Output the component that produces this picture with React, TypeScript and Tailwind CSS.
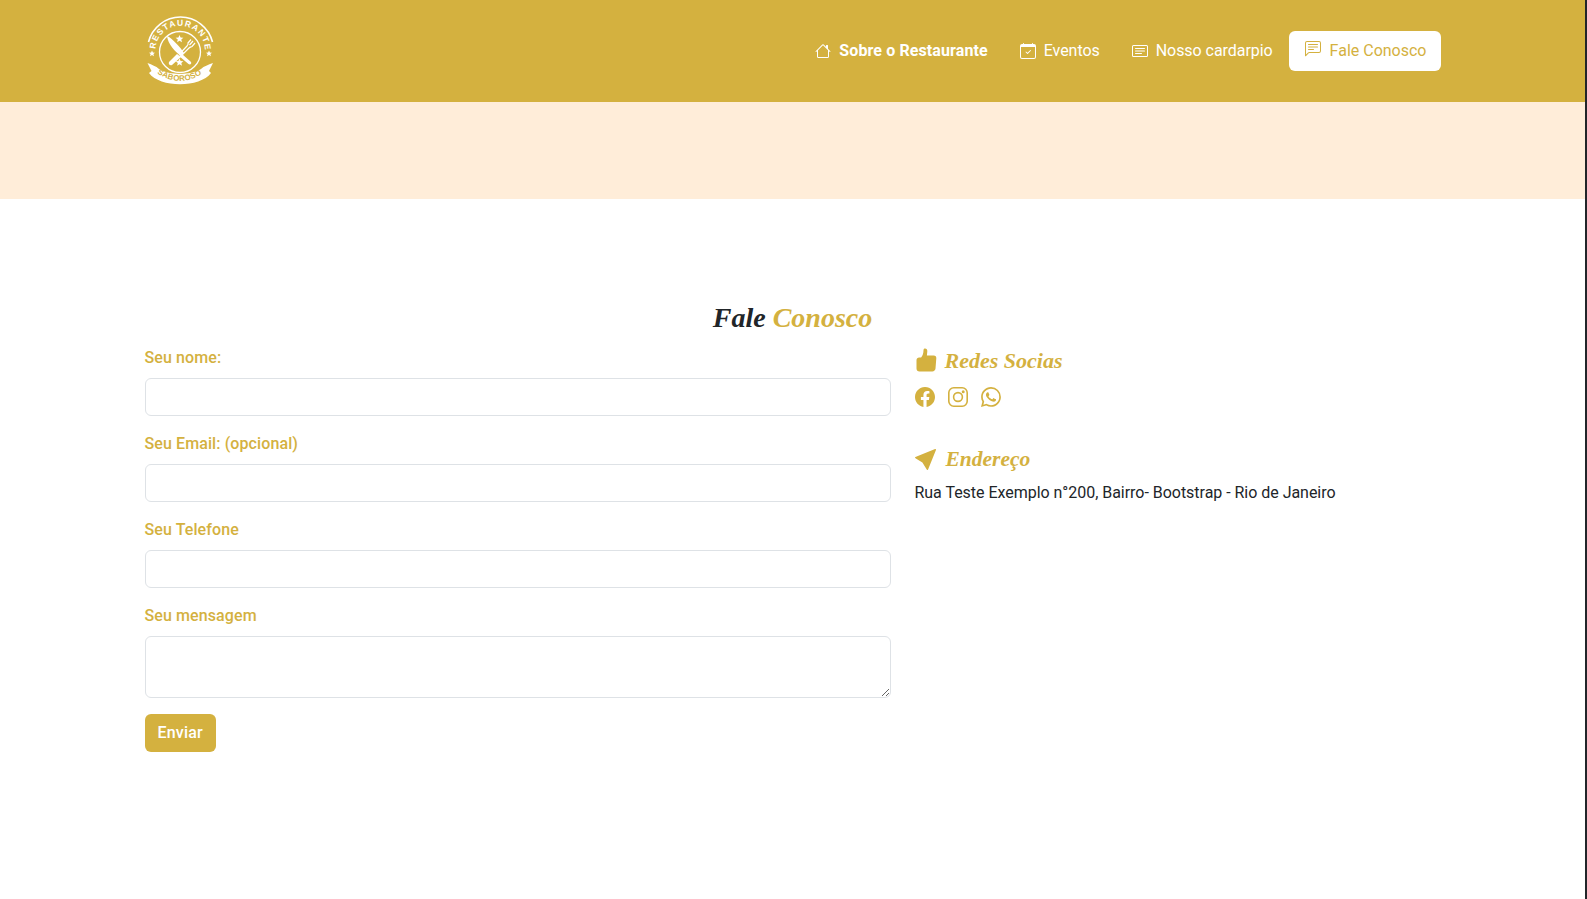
const GOLD = "#d4b13f";

function Logo() {
  return (
    <svg width="66" height="72" viewBox="0 0 66 72" fill="none" className="ml-[3px] overflow-visible">
      <path d="M0.5 27 A33 33 0 0 1 64.5 27" stroke="#fff" strokeWidth="1.6" />
      <path id="logo-arc" d="M7.5 34 A24.8 24.8 0 0 1 57 34" stroke="none" />
      <text fontFamily="'Liberation Sans', sans-serif" fontSize="8.5" fontWeight="700" fill="#fff">
        <textPath href="#logo-arc" textLength="75" lengthAdjust="spacing">RESTAURANTE</textPath>
      </text>
      <circle cx="32" cy="37" r="20.5" stroke="#fff" strokeWidth="1.3" />
      <path d="M19 21 C24 23 33 33 36 38 L33 41 C27 37 20 29 19 21 Z" fill="#fff" />
      <path d="M34 39 L43 47 C44 49 42 50 40.5 49 L31 41 Z" fill="#fff" />
      <path d="M29 39 L33 42 L24 50 C22 51 20 49 21 47 Z" fill="#fff" />
      <path d="M31 39.5 L39 31 C40 30 40.5 29.5 40 28 L43 24.5 M33 41 L41 33 C42 32 43 32 44 31.5 L47 28 M41.5 30 L45 26" stroke="#fff" strokeWidth="1.2" />
      <path d="M31.5 20 l1.1 2.6 2.8 .2 -2.1 1.8 .7 2.7 -2.5 -1.5 -2.4 1.5 .7 -2.7 -2.2 -1.8 2.8 -.2 Z" fill="#fff" />
      <path d="M31.5 43.5 l1.1 2.6 2.8 .2 -2.1 1.8 .7 2.7 -2.5 -1.5 -2.4 1.5 .7 -2.7 -2.2 -1.8 2.8 -.2 Z" fill="#fff" />
      <path d="M4 35.5 l.9 2 2.1 .2 -1.6 1.4 .5 2.1 -1.9 -1.1 -1.9 1.1 .5 -2.1 -1.6 -1.4 2.1 -.2 Z" fill="#fff" />
      <path d="M61 35.5 l.9 2 2.1 .2 -1.6 1.4 .5 2.1 -1.9 -1.1 -1.9 1.1 .5 -2.1 -1.6 -1.4 2.1 -.2 Z" fill="#fff" />
      <path d="M-0.5 48 C4 50 8 51 11 54 C22 60.5 42 60.5 53 54 C56 51 60 50 65 48 L61 56 L63 58 C52 73 12 73 1 58 L3.5 56 Z" fill="#fff" />
      <path id="logo-band" d="M9 58 Q32 74 55 58" stroke="none" />
      <text fontFamily="'Liberation Sans', sans-serif" fontSize="8" fontWeight="700" fill={GOLD}>
        <textPath href="#logo-band" textLength="48" lengthAdjust="spacing">SABOROSO</textPath>
      </text>
    </svg>
  );
}

function HouseIcon() {
  return (
    <svg width="16" height="16" viewBox="0 0 16 16" fill="#fff">
      <path d="M8.707 1.5a1 1 0 0 0-1.414 0L.646 8.146a.5.5 0 0 0 .708.708L2 8.207V13.5A1.5 1.5 0 0 0 3.5 15h9a1.5 1.5 0 0 0 1.5-1.5V8.207l.646.647a.5.5 0 0 0 .708-.708L13 5.793V2.5a.5.5 0 0 0-.5-.5h-1a.5.5 0 0 0-.5.5v1.293L8.707 1.5ZM13 7.207V13.5a.5.5 0 0 1-.5.5h-9a.5.5 0 0 1-.5-.5V7.207l5-5 5 5Z" />
    </svg>
  );
}

function CalendarIcon() {
  return (
    <svg width="16" height="16" viewBox="0 0 16 16" fill="#fff">
      <path d="M10.854 7.146a.5.5 0 0 1 0 .708l-3 3a.5.5 0 0 1-.708 0l-1.5-1.5a.5.5 0 1 1 .708-.708L7.5 9.793l2.646-2.647a.5.5 0 0 1 .708 0z" />
      <path d="M3.5 0a.5.5 0 0 1 .5.5V1h8V.5a.5.5 0 0 1 1 0V1h1a2 2 0 0 1 2 2v11a2 2 0 0 1-2 2H2a2 2 0 0 1-2-2V3a2 2 0 0 1 2-2h1V.5a.5.5 0 0 1 .5-.5zM1 4v10a1 1 0 0 0 1 1h12a1 1 0 0 0 1-1V4H1z" />
    </svg>
  );
}

function CardIcon() {
  return (
    <svg width="16" height="16" viewBox="0 0 16 16" fill="#fff">
      <path d="M14.5 3a.5.5 0 0 1 .5.5v9a.5.5 0 0 1-.5.5h-13a.5.5 0 0 1-.5-.5v-9a.5.5 0 0 1 .5-.5h13zm-13-1A1.5 1.5 0 0 0 0 3.5v9A1.5 1.5 0 0 0 1.5 14h13a1.5 1.5 0 0 0 1.5-1.5v-9A1.5 1.5 0 0 0 14.5 2h-13z" />
      <path d="M3 5.5a.5.5 0 0 1 .5-.5h9a.5.5 0 0 1 0 1h-9a.5.5 0 0 1-.5-.5zM3 8a.5.5 0 0 1 .5-.5h9a.5.5 0 0 1 0 1h-9A.5.5 0 0 1 3 8zm0 2.5a.5.5 0 0 1 .5-.5h6a.5.5 0 0 1 0 1h-6a.5.5 0 0 1-.5-.5z" />
    </svg>
  );
}

function ChatIcon() {
  return (
    <svg width="16" height="16" viewBox="0 0 16 16" fill={GOLD} className="-mt-1">
      <path d="M14 1a1 1 0 0 1 1 1v8a1 1 0 0 1-1 1H4.414A2 2 0 0 0 3 11.586l-2 2V2a1 1 0 0 1 1-1h12zM2 0a2 2 0 0 0-2 2v12.793a.5.5 0 0 0 .854.353l2.853-2.853A1 1 0 0 1 4.414 12H14a2 2 0 0 0 2-2V2a2 2 0 0 0-2-2H2z" />
      <path d="M3 3.5a.5.5 0 0 1 .5-.5h9a.5.5 0 0 1 0 1h-9a.5.5 0 0 1-.5-.5zM3 6a.5.5 0 0 1 .5-.5h9a.5.5 0 0 1 0 1h-9A.5.5 0 0 1 3 6zm0 2.5a.5.5 0 0 1 .5-.5h5a.5.5 0 0 1 0 1h-5a.5.5 0 0 1-.5-.5z" />
    </svg>
  );
}

function FacebookIcon() {
  return (
    <svg width="20" height="20" viewBox="0 0 16 16" fill={GOLD}>
      <path d="M16 8.049c0-4.446-3.582-8.05-8-8.05C3.58 0-.002 3.603-.002 8.05c0 4.017 2.926 7.347 6.75 7.951v-5.625h-2.03V8.05H6.75V6.275c0-2.017 1.195-3.131 3.022-3.131.876 0 1.791.157 1.791.157v1.98h-1.009c-.993 0-1.303.621-1.303 1.258v1.51h2.218l-.354 2.326H9.25V16c3.824-.604 6.75-3.934 6.75-7.951z" />
    </svg>
  );
}

function InstagramIcon() {
  return (
    <svg width="20" height="20" viewBox="0 0 20 20" fill="none" stroke={GOLD} strokeWidth="1.6">
      <rect x="0.8" y="0.8" width="18.4" height="18.4" rx="5" />
      <circle cx="10" cy="10" r="4.4" />
      <circle cx="15.2" cy="4.8" r="0.7" fill={GOLD} />
    </svg>
  );
}

function WhatsappIcon() {
  return (
    <svg width="20" height="20" viewBox="0 0 16 16" fill={GOLD}>
      <path d="M13.601 2.326A7.854 7.854 0 0 0 7.994 0C3.627 0 .068 3.558.064 7.926c0 1.399.366 2.76 1.057 3.965L0 16l4.204-1.102a7.933 7.933 0 0 0 3.79.965h.004c4.368 0 7.926-3.558 7.93-7.93A7.898 7.898 0 0 0 13.6 2.326zM7.994 14.521a6.573 6.573 0 0 1-3.356-.92l-.24-.144-2.494.654.666-2.433-.156-.251a6.56 6.56 0 0 1-1.007-3.505c0-3.626 2.957-6.584 6.591-6.584a6.56 6.56 0 0 1 4.66 1.931 6.557 6.557 0 0 1 1.928 4.66c-.004 3.639-2.961 6.592-6.592 6.592zm3.615-4.934c-.197-.099-1.17-.578-1.353-.646-.182-.065-.315-.099-.445.099-.133.197-.513.646-.627.775-.114.133-.232.148-.43.05-.197-.1-.836-.308-1.592-.985-.59-.525-.985-1.175-1.103-1.372-.114-.198-.011-.304.088-.403.087-.088.197-.232.296-.346.1-.114.133-.198.198-.33.065-.134.034-.248-.015-.347-.05-.099-.445-1.076-.612-1.47-.16-.389-.323-.335-.445-.34-.114-.007-.247-.007-.38-.007a.729.729 0 0 0-.529.247c-.182.198-.691.677-.691 1.654 0 .977.71 1.916.81 2.049.098.133 1.394 2.132 3.383 2.992.47.205.84.326 1.129.418.475.152.904.129 1.246.08.38-.058 1.171-.48 1.338-.943.164-.464.164-.86.114-.943-.049-.084-.182-.133-.38-.232z" />
    </svg>
  );
}

function ThumbIcon() {
  return (
    <svg width="21" height="24" viewBox="0 0 20 24" fill={GOLD} className="ml-px">
      <path d="M8.5 0.5 C10 0.5 11 1.8 10.8 3.6 L10.4 7.4 L17.2 7.4 C19 7.4 20 8.6 19.8 10.2 L19 20.5 C18.8 22.3 17.6 23.4 15.8 23.4 L3 23.4 C1.2 23.4 0 22.2 0 20.4 L0 12.2 C0 10.6 1.2 9.6 2.6 9.6 L4.6 9.6 C6.2 7.6 7 5 7 2.2 C7 1.2 7.6 0.5 8.5 0.5 Z" />
    </svg>
  );
}

function NavIcon() {
  return (
    <svg width="21" height="21" viewBox="0 0 16 16" fill={GOLD}>
      <path d="M15.964.686a.5.5 0 0 0-.65-.65L.767 5.855H.766l-.452.18a.5.5 0 0 0-.082.887l.41.26.001.002 4.995 3.178 3.178 4.995.002.002.26.41a.5.5 0 0 0 .886-.083l6-15Z" />
    </svg>
  );
}

function NavLink({ icon, label, bold }: { icon: React.ReactNode; label: string; bold?: boolean }) {
  return (
    <a className={"flex items-center gap-2 px-4 py-2 text-base text-white " + (bold ? "font-bold tracking-[0.1px]" : "tracking-[-0.05px]")}>
      {icon}
      <span>{label}</span>
    </a>
  );
}

function Field({ label, rows }: { label: string; rows?: number }) {
  return (
    <div className="mb-4">
      <label className="block mb-2 text-base leading-6 font-medium tracking-[0.1px] text-[#d4b13f]">{label}</label>
      {rows ? (
        <textarea rows={rows} className="block w-full h-[62px] rounded-md border border-[#dee2e6] bg-white" />
      ) : (
        <input className="block w-full h-[38px] rounded-md border border-[#dee2e6] bg-white" />
      )}
    </div>
  );
}

export default function App() {
  return (
    <div className="min-h-[899px] bg-white font-['Roboto',sans-serif] border-r-2 border-[#212529]">
      <header className="h-[102px] bg-[#d4b13f]">
        <div className="mx-auto w-[1320px] h-full px-3 flex items-center justify-between">
          <Logo />
          <nav className="flex items-center">
            <NavLink icon={<HouseIcon />} label="Sobre o Restaurante" bold />
            <NavLink icon={<CalendarIcon />} label="Eventos" />
            <NavLink icon={<CardIcon />} label="Nosso cardarpio" />
            <a className="flex items-center gap-[9px] pl-4 pr-[14px] py-2 rounded-md bg-white text-base text-[#d4b13f]">
              <ChatIcon />
              <span>Fale Conosco</span>
            </a>
          </nav>
        </div>
      </header>
      <div className="h-[97px] bg-[#ffedd9]" />
      <main className="mx-auto w-[1320px] px-3 pt-[100px]">
        <h2 className="text-center text-[28px] leading-[38px] font-bold italic font-['Liberation_Serif',serif] text-[#212529]">
          Fale <span className="text-[#d4b13f]">Conosco</span>
        </h2>
        <div className="flex gap-6 mt-[9px]">
          <form className="w-[746px] shrink-0">
            <Field label="Seu nome:" />
            <Field label="Seu Email: (opcional)" />
            <Field label="Seu Telefone" />
            <Field label="Seu mensagem" rows={2} />
            <button type="button" className="h-[38px] px-[13px] rounded-md bg-[#d4b13f] text-base font-medium tracking-[0.2px] text-white">
              Enviar
            </button>
          </form>
          <aside className="flex-1">
            <h4 className="flex items-center gap-2 h-[24px] mt-[2px] text-[22px] font-bold italic font-['Liberation_Serif',serif] text-[#d4b13f]">
              <ThumbIcon />
              Redes Socias
            </h4>
            <div className="flex gap-[13px] mt-[15px]">
              <FacebookIcon />
              <InstagramIcon />
              <WhatsappIcon />
            </div>
            <h4 className="flex items-center gap-2.5 h-[24px] mt-[40px] text-[21.5px] font-bold italic font-['Liberation_Serif',serif] text-[#d4b13f]">
              <NavIcon />
              Endereço
            </h4>
            <p className="mt-[10px] text-base leading-6 tracking-[-0.03px] text-[#212529]">
              Rua Teste Exemplo n°200, Bairro- Bootstrap - Rio de Janeiro
            </p>
          </aside>
        </div>
      </main>
    </div>
  );
}
